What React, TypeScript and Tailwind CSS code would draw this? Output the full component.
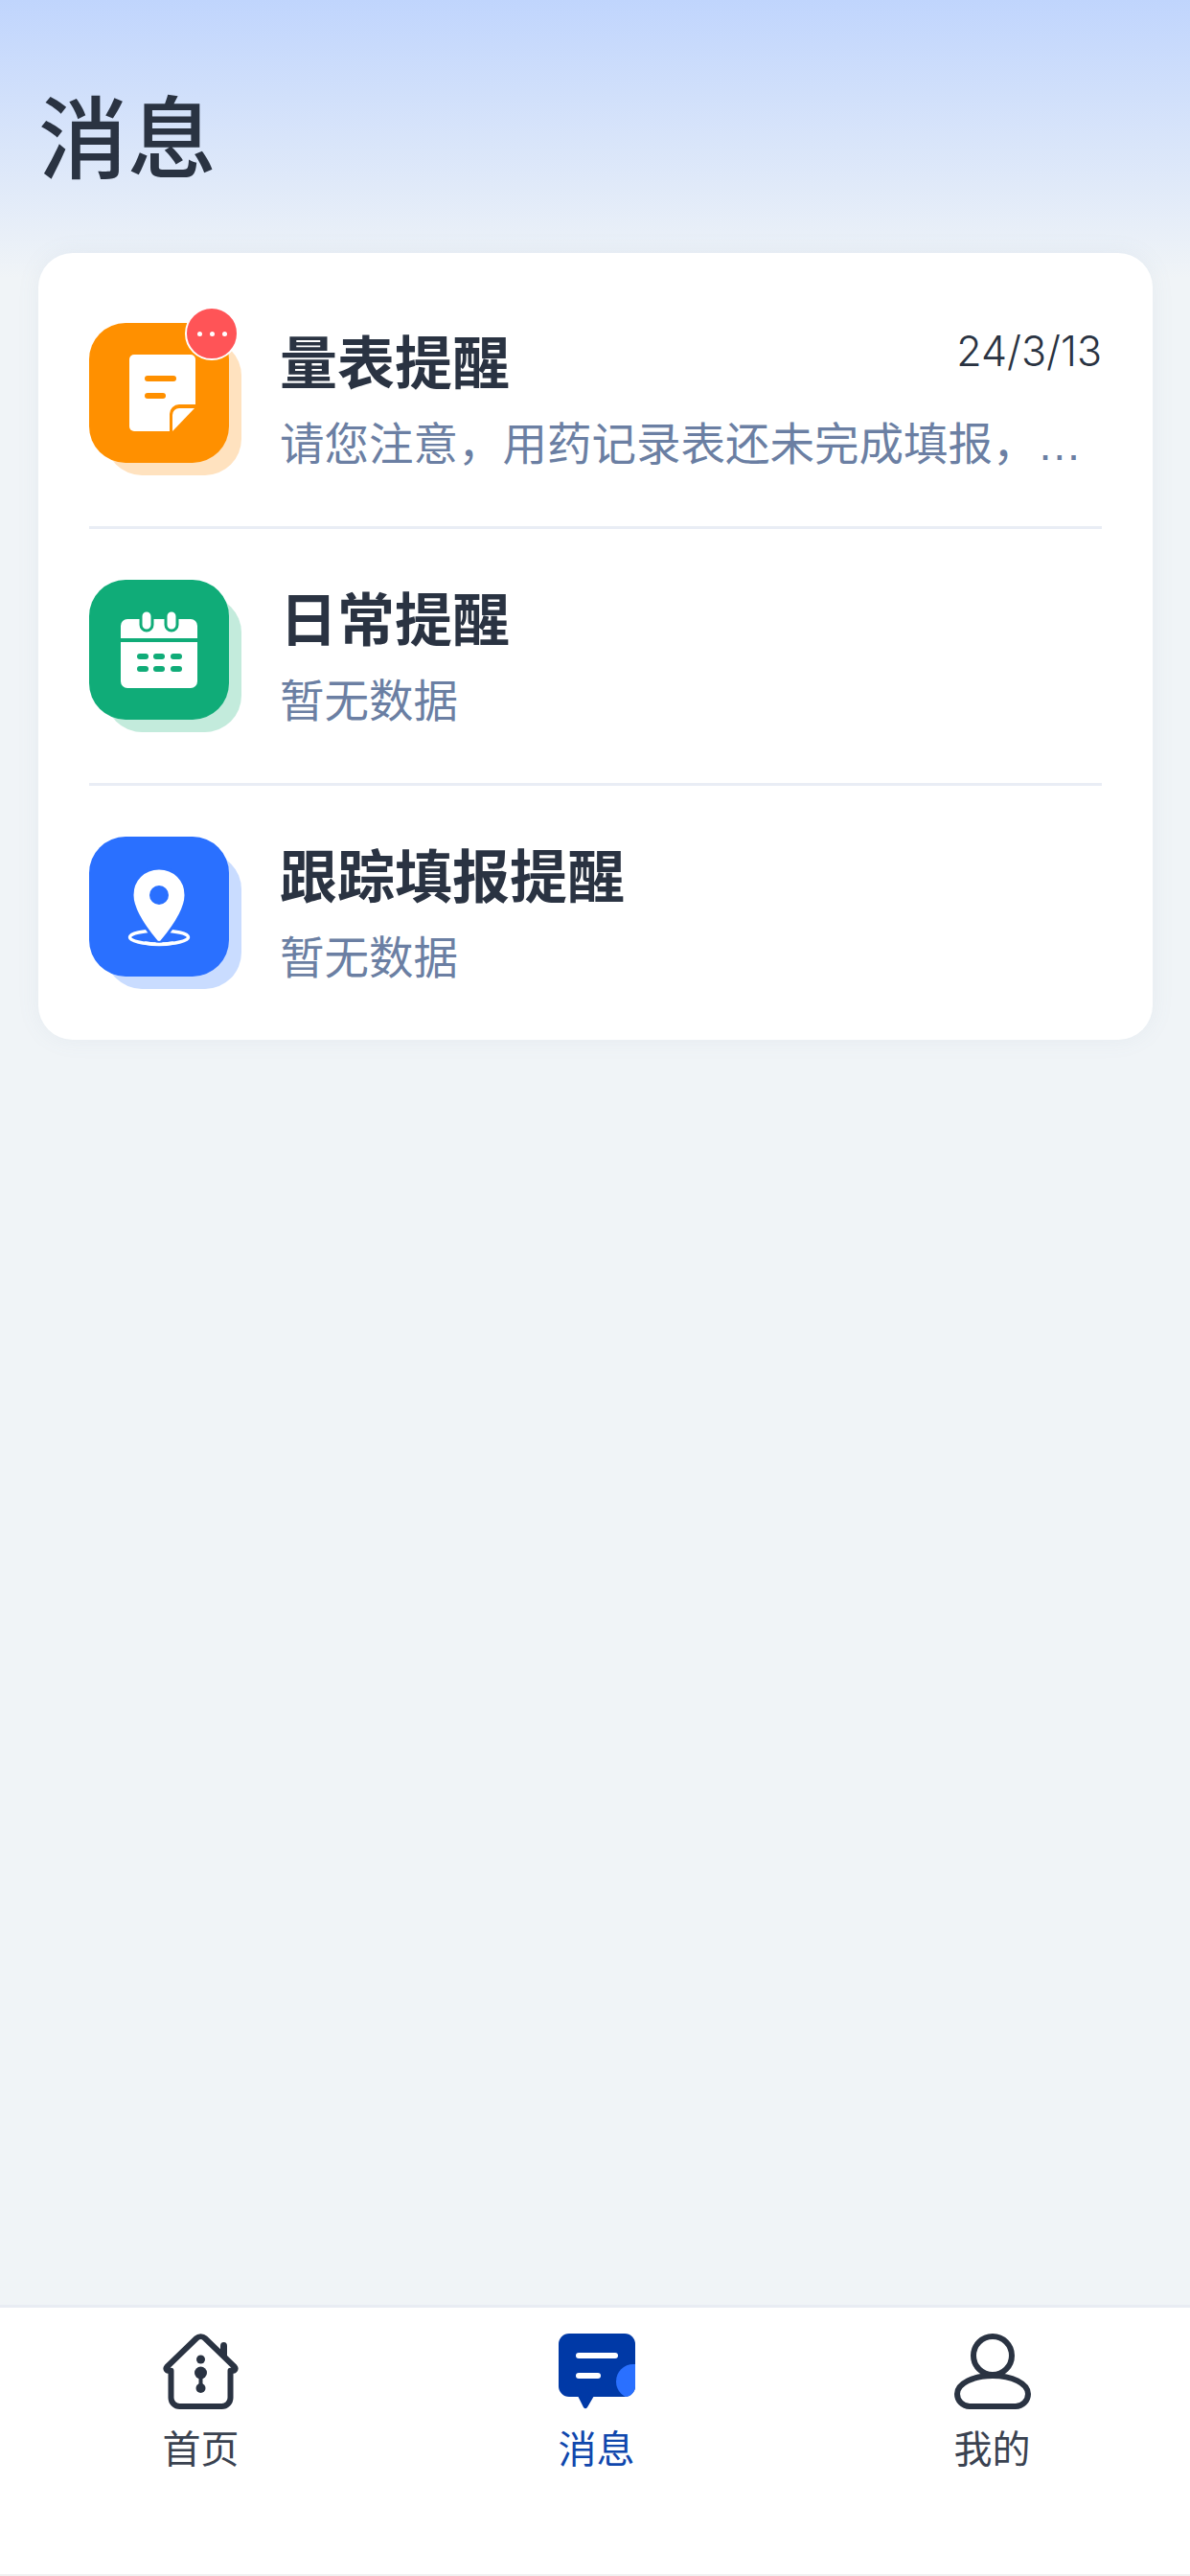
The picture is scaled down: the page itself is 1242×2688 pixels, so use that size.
import React from 'react';

const cjk = '"Liberation Sans", "Noto Sans CJK SC", sans-serif';

const DocIcon = () => (
  <svg viewBox="0 0 146 146" className="size-full">
    <path d="M47 33H106a5 5 0 0 1 5 5V113H47a5 5 0 0 1-5-5V38a5 5 0 0 1 5-5Z" fill="#fff" />
    <path d="M84 115V95a10 10 0 0 1 10-10H113V115Z" fill="#ff9000" />
    <path d="M87 113V96a7 7 0 0 1 7-7H110Z" fill="#fff" />
    <rect x="58" y="55" width="33" height="6" rx="3" fill="#ff9000" />
    <rect x="58" y="73" width="22" height="6" rx="3" fill="#ff9000" />
  </svg>
);

const CalendarIcon = () => (
  <svg viewBox="0 0 146 146" className="size-full">
    <path d="M40 41H106a7 7 0 0 1 7 7V106a7 7 0 0 1-7 7H40a7 7 0 0 1-7-7V48a7 7 0 0 1 7-7Z" fill="#fff" />
    <rect x="33" y="61" width="80" height="4" fill="#10ac78" />
    <rect x="54" y="32" width="12" height="21" rx="6" fill="#fff" stroke="#10ac78" strokeWidth="3" />
    <rect x="80" y="32" width="12" height="21" rx="6" fill="#fff" stroke="#10ac78" strokeWidth="3" />
    <rect x="50" y="77" width="12" height="6" rx="3" fill="#10ac78" />
    <rect x="67" y="77" width="12" height="6" rx="3" fill="#10ac78" />
    <rect x="85" y="77" width="12" height="6" rx="3" fill="#10ac78" />
    <rect x="50" y="90" width="12" height="6" rx="3" fill="#10ac78" />
    <rect x="67" y="90" width="12" height="6" rx="3" fill="#10ac78" />
    <rect x="85" y="90" width="12" height="6" rx="3" fill="#10ac78" />
  </svg>
);

const PinIcon = () => (
  <svg viewBox="0 0 146 146" className="size-full">
    <ellipse cx="73" cy="105" rx="30.500" ry="7" fill="none" stroke="#fff" strokeWidth="3.500" />
    <path d="M73 33C57 33 45 45 45 61C45 76 60 97 70 109Q73 112 76 109C86 97 101 76 101 61C101 45 89 33 73 33Z" fill="#fff" stroke="#2a70ff" strokeWidth="3" />
    <path d="M58 111Q73 114 88 111" fill="none" stroke="#fff" strokeWidth="3.500" />
    <circle cx="73" cy="61" r="10" fill="#2a70ff" />
  </svg>
);

const HomeIcon = () => (
  <svg viewBox="0 0 80 80" className="size-20">
    <path d="M60 13 Q60 9 63.5 9 Q67 9 67 13 V28 L60 22 Z" fill="#2a3342" />
    <path d="M35 5L4 35a2.2 2.2 0 0 0 1.5 3.7H8.500V67a9 9 0 0 0 9 9H61.500a9 9 0 0 0 9-9V38.700H73.500a2.200 2.200 0 0 0 1.500-3.700L44 5a6.500 6.500 0 0 0-9 0Z" fill="#fff" stroke="#2a3342" strokeWidth="6" strokeLinejoin="round" />
    <circle cx="39.500" cy="27" r="4.500" fill="#2a3342" />
    <circle cx="39.500" cy="41" r="6.500" fill="#2a3342" />
    <circle cx="39.500" cy="57" r="5" fill="#2a3342" />
    <rect x="37.500" y="42" width="4" height="14" fill="#2a3342" />
  </svg>
);

const MessageIcon = () => (
  <svg viewBox="0 0 80 80" className="size-20">
    <defs>
      <clipPath id="bubble">
        <rect width="80" height="66" rx="11" />
      </clipPath>
    </defs>
    <rect width="80" height="66" rx="11" fill="#0039a6" />
    <path d="M20 65H37L30 77Q28 79.500 26 77Z" fill="#0039a6" />
    <g clipPath="url(#bubble)">
      <circle cx="78" cy="50" r="18" fill="#2a70ff" />
    </g>
    <rect x="18" y="20" width="44" height="6" rx="3" fill="#fff" />
    <rect x="18" y="41" width="26" height="6" rx="3" fill="#fff" />
  </svg>
);

const UserIcon = () => (
  <svg viewBox="0 0 80 80" className="size-20" fill="none" stroke="#2a3342" strokeWidth="6">
    <circle cx="40" cy="23" r="20" />
    <path d="M16 76H64a13 13 0 0 0 13-13C77 52 60 44 40 44S3 52 3 63a13 13 0 0 0 13 13Z" />
  </svg>
);

const reminders = [
  { title: '量表提醒', desc: '请您注意，用药记录表还未完成填报，…', date: '24/3/13', unread: true, bg: 'bg-[#ff9000]', shade: 'bg-[#ffe2bf]', icon: <DocIcon /> },
  { title: '日常提醒', desc: '暂无数据', bg: 'bg-[#10ac78]', shade: 'bg-[#c3ebdc]', icon: <CalendarIcon /> },
  { title: '跟踪填报提醒', desc: '暂无数据', bg: 'bg-[#2a70ff]', shade: 'bg-[#c9dcff]', icon: <PinIcon /> },
];

const tabs = [
  { label: '首页', icon: <HomeIcon />, color: 'text-[#3a4250]' },
  { label: '消息', icon: <MessageIcon />, color: 'text-[#0f47ad]' },
  { label: '我的', icon: <UserIcon />, color: 'text-[#3a4250]' },
];

export default function App() {
  return (
    <div
      className="flex h-[2688px] w-[1242px] flex-col bg-[#f0f4f7] bg-[linear-gradient(#c0d5fd_0px,#f0f4f7_290px,#f0f4f7_100%)]"
      style={{ fontFamily: cjk }}
    >
      <h1 className="pt-[84px] pl-[40px] text-[93px] leading-[126px] font-medium text-[#2a3342]">消息</h1>

      <main className="flex-1 pt-[54px] pr-[39px] pl-[40px]">
        <div className="rounded-[36px] bg-white px-[53px] pt-[73px] pb-[66px] shadow-[0_0_24px_rgba(120,140,170,0.08)]">
          {reminders.map((item, i) => (
            <div
              key={item.title}
              className={i < reminders.length - 1 ? 'mb-[53px] border-b-[3px] border-[#e9edf5] pb-[66px]' : ''}
            >
              <div className="flex h-[146px]">
                <div className="relative mr-[53px] size-[146px] shrink-0">
                  <div className={`absolute top-[17px] left-[17px] size-[142px] rounded-[38px] ${item.shade}`} />
                  <div className={`absolute inset-0 rounded-[38px] ${item.bg}`}>{item.icon}</div>
                  {item.unread && (
                    <div className="absolute -top-[17px] -right-[10px] flex size-[56px] items-center justify-center gap-[8px] rounded-full border-[2px] border-white bg-[#ff5457]">
                      <span className="size-[5px] rounded-full bg-white" />
                      <span className="size-[5px] rounded-full bg-white" />
                      <span className="size-[5px] rounded-full bg-white" />
                    </div>
                  )}
                </div>
                <div className="min-w-0 flex-1">
                  <div className="flex items-start justify-between pt-[11px]">
                    <span className="text-[60px] leading-[66px] font-semibold text-[#2a3342]">{item.title}</span>
                    {item.date && (
                      <span className="-mt-[14px] font-['Inter',sans-serif] text-[43px] leading-[64px] font-light text-[#2a3342]">{item.date}</span>
                    )}
                  </div>
                  <p className="mt-[18px] text-[46.5px] leading-[64px] whitespace-nowrap text-[#6b7fa3]">{item.desc}</p>
                </div>
              </div>
            </div>
          ))}
        </div>
      </main>

      <nav className="grid h-[283px] grid-cols-3 border-t-[3px] border-b-[2px] border-t-[#e8ecf3] border-b-[#f0f0f0] bg-white pt-[27px] pl-[3px]">
        {tabs.map(tab => (
          <div key={tab.label} className="flex flex-col items-center">
            {tab.icon}
            <span className={`mt-[12px] text-[40px] leading-[58px] ${tab.color}`}>{tab.label}</span>
          </div>
        ))}
      </nav>
    </div>
  );
}
